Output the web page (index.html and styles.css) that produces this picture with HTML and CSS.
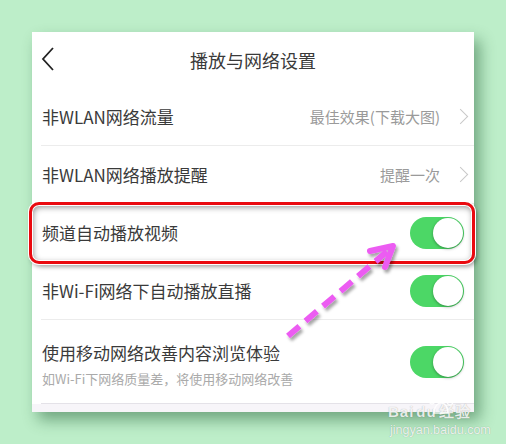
FILE: index.html
```html
<!DOCTYPE html>
<html lang="zh-CN">
<head>
  <meta charset="UTF-8" />
  <title>播放与网络设置</title>
  <meta name="viewport" content="width=device-width, initial-scale=1.0" />
  <link rel="stylesheet" href="styles.css">
</head>
<body>
  <div class="card">
    <div class="header">
      <svg class="back" width="14" height="26" viewBox="0 0 14 26">
        <polyline points="12,2 2,13 12,24" fill="none" stroke="#222" stroke-width="1.8" />
      </svg>
      <h2>播放与网络设置</h2>
    </div>

    <div class="row">
      <span class="label">非WLAN网络流量</span>
      <span class="value">最佳效果(下载大图)</span>
      <span class="arrow"></span>
    </div>

    <div class="row">
      <span class="label">非WLAN网络播放提醒</span>
      <span class="value">提醒一次</span>
      <span class="arrow"></span>
    </div>

    <div class="row highlight">
      <span class="label">频道自动播放视频</span>
      <span class="switch"></span>
      <div class="frame"></div>
    </div>

    <div class="row">
      <span class="label">非Wi-Fi网络下自动播放直播</span>
      <span class="switch"></span>
    </div>

    <div class="row tall">
      <div class="text">
        <span class="label">使用移动网络改善内容浏览体验</span>
        <span class="sub">如Wi-Fi下网络质量差，将使用移动网络改善</span>
      </div>
      <span class="switch"></span>
    </div>

    <div class="footer"></div>
  </div>

  <svg class="pointer" width="506" height="444" viewBox="0 0 506 444">
    <defs>
      <filter id="drop" x="-20%" y="-20%" width="140%" height="140%">
        <feDropShadow dx="2" dy="3" stdDeviation="1.5" flood-color="#000" flood-opacity="0.35" />
      </filter>
    </defs>
    <g filter="url(#drop)" stroke="#ec5cf2" stroke-width="6" fill="none">
      <line x1="288" y1="336" x2="390" y2="249" stroke-dasharray="15 8" />
      <polyline points="370,251 393,246 385,267" stroke-linecap="round" stroke-linejoin="round" />
    </g>
  </svg>

  <div class="watermark">
    <svg class="paw" width="30" height="26" viewBox="0 0 30 26">
      <g fill="none" stroke="rgba(255,255,255,0.85)" stroke-width="1.5">
        <ellipse cx="7" cy="9" rx="3" ry="4" />
        <ellipse cx="13" cy="4" rx="3" ry="3.5" />
        <ellipse cx="20" cy="4" rx="3" ry="3.5" />
        <ellipse cx="25" cy="10" rx="3" ry="4" />
        <path d="M9 22 C9 15 13 12 16 12 C20 12 23 16 23 22 Z" />
      </g>
    </svg>
    <div class="brand">Bai<span class="du">du</span>经验</div>
    <div class="site">jingyan.baidu.com</div>
  </div>
</body>
</html>
```

FILE: styles.css
```css
body {
  margin: 0;
  width: 506px;
  height: 444px;
  overflow: hidden;
  background: #bdeec9;
  font-family: "Noto Sans CJK SC", "Noto Sans", sans-serif;
  color: #3a3a3a;
  position: relative;
}

.card {
  margin: 32px 0 0 32px;
  width: 442px;
  background: #fff;
  box-shadow: 6px 8px 14px rgba(20, 80, 40, 0.45);
}

.header {
  height: 56px;
  display: flex;
  align-items: center;
  justify-content: center;
  position: relative;
}

.header .back {
  position: absolute;
  left: 9px;
  top: 14px;
}

.header h2 {
  margin: 0;
  font-size: 18px;
  font-weight: normal;
  color: #3a3a3a;
}

.row {
  height: 57px;
  margin-left: 9px;
  padding: 0 10px 0 1px;
  border-bottom: 1px solid #ececec;
  display: flex;
  align-items: center;
}

.row .label {
  font-size: 17px;
  flex: 1;
}

.row .value {
  font-size: 15px;
  color: #9a9a9a;
}

.row .arrow {
  width: 10px;
  height: 10px;
  border-top: 1px solid #c8c8c8;
  border-right: 1px solid #c8c8c8;
  transform: rotate(45deg);
  margin: 0 -2px 0 15px;
}

.highlight {
  position: relative;
}

.highlight .frame {
  position: absolute;
  left: -12px;
  right: -1px;
  top: -2px;
  bottom: -3px;
  border: 3px solid #ea0a10;
  border-radius: 10px;
  box-shadow: 0 0 0 1px #fff, 2px 3px 4px rgba(0, 0, 0, 0.35), inset 0 0 0 1px #fff, inset 1px 2px 6px rgba(0, 0, 0, 0.45);
}

.switch {
  width: 54px;
  height: 32px;
  border-radius: 16px;
  background: #4cd766;
  position: relative;
  flex-shrink: 0;
}

.switch::after {
  content: "";
  position: absolute;
  right: 1px;
  top: 1px;
  width: 30px;
  height: 30px;
  border-radius: 50%;
  background: #fff;
  box-shadow: 0 1px 3px rgba(0, 0, 0, 0.35);
}

.tall {
  height: 83px;
  border-bottom: 1px solid #e4e2e8;
}

.tall .text {
  flex: 1;
  display: flex;
  flex-direction: column;
  gap: 4px;
  padding-top: 4px;
}

.tall .sub {
  font-size: 13px;
  color: #aaa;
}

.footer {
  height: 8px;
  background: #f7f5f9;
}

.pointer {
  position: absolute;
  left: 0;
  top: 0;
}

.watermark {
  position: absolute;
  left: 388px;
  top: 390px;
  width: 92px;
  color: rgba(255, 255, 255, 0.85);
  text-shadow: 0 0 1px rgba(0, 0, 0, 0.3);
  font-family: "Liberation Sans", sans-serif;
}

.watermark .paw {
  position: absolute;
  left: 37px;
  top: 1px;
}

.watermark .brand {
  margin-top: 14px;
  font-size: 15px;
  font-weight: bold;
  line-height: 16px;
  letter-spacing: 1px;
  white-space: nowrap;
}

.watermark .du {
  margin: 0 2px;
}

.watermark .site {
  font-size: 12.5px;
  line-height: 16px;
  margin: 2px 0 0 2px;
  white-space: nowrap;
}
```
